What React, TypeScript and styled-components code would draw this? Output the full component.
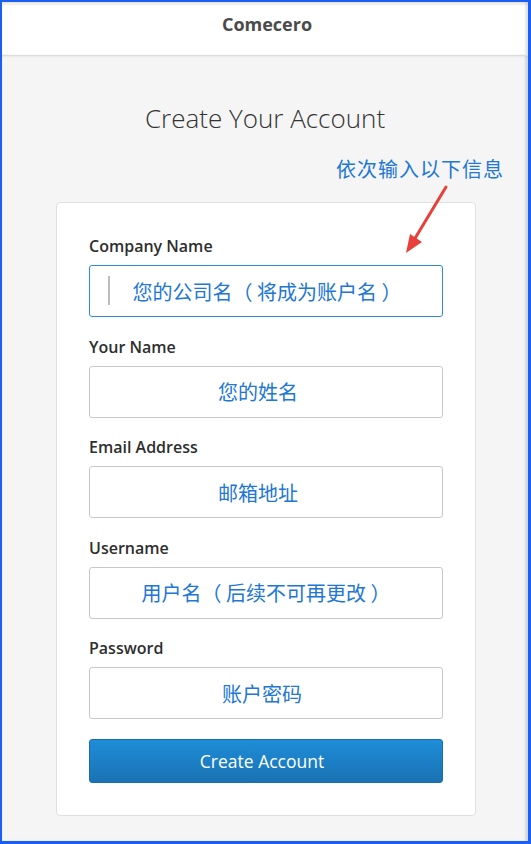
import React from "react";
import styled, { createGlobalStyle } from "styled-components";

const Global = createGlobalStyle`
  html, body { margin: 0; padding: 0; }
  body { font-family: "Open Sans", "Noto Sans CJK SC", sans-serif; background: #fff; }
  * { box-sizing: border-box; }
`;

const Frame = styled.div`
  width: 531px;
  height: 844px;
  border-style: solid;
  border-color: #1b5ff2;
  border-width: 2px 3px 3px 2px;
  overflow: hidden;
`;

const Screen = styled.div`
  position: relative;
  height: 100%;
  background: #f5f5f5;
  display: flex;
  flex-direction: column;
  box-shadow: inset -3px 0 2px rgba(0, 0, 0, 0.12), inset 0 3px 2px rgba(0, 0, 0, 0.08);
`;

const Header = styled.header`
  height: 54px;
  background: #fff;
  border-bottom: 1px solid #dcdcdc;
  box-shadow: 0 1px 2px rgba(0, 0, 0, 0.06), inset -3px 0 2px rgba(0, 0, 0, 0.1), inset 0 3px 2px rgba(0, 0, 0, 0.08);
  display: flex;
  justify-content: center;
  padding: 10px 0 0 4px;
  font-family: "Open Sans", sans-serif;
  font-weight: 700;
  font-size: 18px;
  line-height: 24px;
  color: #4a4a4a;
`;

const Title = styled.h1`
  margin: 45px 0 0;
  text-align: center;
  font-family: "Open Sans", sans-serif;
  font-weight: 300;
  font-size: 26px;
  line-height: 34px;
  color: #333;
`;

const Card = styled.form`
  margin: 67px 0 0 54px;
  width: 420px;
  background: #fff;
  border: 1px solid #e0e0e0;
  border-radius: 4px;
  padding: 33px 32px 32px;
  display: flex;
  flex-direction: column;
  gap: 19.5px;
`;

const Group = styled.div`
  display: flex;
  flex-direction: column;
  gap: 8px;
`;

const Label = styled.label`
  font-family: "Open Sans", sans-serif;
  font-weight: 550;
  font-size: 16px;
  line-height: 21px;
  color: #2e2e2e;
`;

const FieldBox = styled.div<{ $focused?: boolean }>`
  position: relative;
  height: 52px;
  border: 1px solid ${(p) => (p.$focused ? "#2d8ad6" : "#c8c8c8")};
  border-radius: 3px;
  background: #fff;
  ${(p) =>
    p.$focused &&
    `&::before {
      content: "";
      position: absolute;
      left: 18px;
      top: 10px;
      width: 2px;
      height: 29px;
      background: #bdbdbd;
    }`}
`;

const Input = styled.input<{ $padL?: number; $padR?: number }>`
  width: 100%;
  height: 100%;
  border: none;
  outline: none;
  background: transparent;
  text-align: center;
  font-family: "Noto Sans CJK SC", sans-serif;
  font-size: 20px;
  color: #2176d6;
  padding: 0 ${(p) => p.$padR ?? 0}px 0 ${(p) => p.$padL ?? 0}px;
  &::placeholder {
    color: #2176d6;
    opacity: 1;
  }
`;

const Button = styled.button`
  height: 44px;
  border: 1px solid #1a6ead;
  border-radius: 3px;
  background: linear-gradient(#1e8dd8, #1a72b3);
  color: #fff;
  font-family: "Open Sans", sans-serif;
  font-size: 17.5px;
  padding: 0 8px 0 0;
  cursor: pointer;
`;

const Note = styled.div`
  position: absolute;
  left: 334px;
  top: 153px;
  font-family: "Noto Sans CJK SC", sans-serif;
  font-size: 20px;
  line-height: 28px;
  color: #2277d4;
  letter-spacing: 1px;
`;

const Arrow = styled.svg`
  position: absolute;
  left: 398px;
  top: 180px;
`;

const fields = [
  { label: "Company Name", placeholder: "您的公司名（ 将成为账户名 ）", focused: true, padL: 2, padR: 0 },
  { label: "Your Name", placeholder: "您的姓名", padL: 0, padR: 16 },
  { label: "Email Address", placeholder: "邮箱地址", padL: 0, padR: 16 },
  { label: "Username", placeholder: "用户名（ 后续不可再更改 ）", padL: 0, padR: 0 },
  { label: "Password", placeholder: "账户密码", padL: 0, padR: 8 },
];

export default function App() {
  return (
    <>
      <Global />
      <Frame>
        <Screen>
          <Header>Comecero</Header>
          <Title>Create Your Account</Title>
          <Card onSubmit={(e) => e.preventDefault()}>
            {fields.map((f) => (
              <Group key={f.label}>
                <Label>{f.label}</Label>
                <FieldBox $focused={f.focused}>
                  <Input $padL={f.padL} $padR={f.padR} type="text" placeholder={f.placeholder} />
                </FieldBox>
              </Group>
            ))}
            <Button type="submit">Create Account</Button>
          </Card>
          <Note>依次输入以下信息</Note>
          <Arrow width="60" height="80" viewBox="0 0 60 80">
            <line x1="46" y1="5" x2="14" y2="58" stroke="#e8403a" strokeWidth="3" strokeLinecap="round" />
            <polygon points="6,71 10,52 22,60" fill="#e8403a" />
          </Arrow>
        </Screen>
      </Frame>
    </>
  );
}
